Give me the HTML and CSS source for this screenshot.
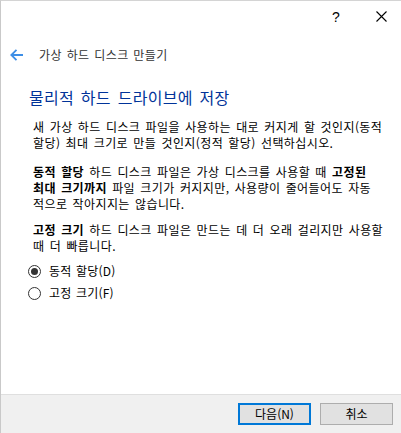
FILE: index.html
```html
<!doctype html>
<html lang="ko">
<head>
    <meta charset="UTF-8">
    <title>가상 하드 디스크 만들기</title>
    <link rel="stylesheet" href="styles.css">
</head>
<body>
    <div class="wz">
        <div class="wz-caption">
            <span class="wz-cap-btn">?</span>
            <span class="wz-cap-btn wz-close">
                <svg width="11" height="11" viewBox="0 0 11 11"><path d="M0.5 0.5L10.5 10.5M10.5 0.5L0.5 10.5" stroke="#000" stroke-width="1.1" fill="none"/></svg>
            </span>
        </div>
        <div class="wz-nav">
            <svg class="wz-back" width="13" height="12" viewBox="0 0 13 12"><path d="M1 6H13M6.5 0.8L1.3 6L6.5 11.2" stroke="#3d8ee6" stroke-width="1.8" fill="none"/></svg>
            <span class="wz-nav-title">가상 하드 디스크 만들기</span>
        </div>
        <h1 class="wz-heading">물리적 하드 드라이브에 저장</h1>
        <div class="wz-body">
            <p>새 가상 하드 디스크 파일을 사용하는 대로 커지게 할 것인지(동적<br>할당) 최대 크기로 만들 것인지(정적 할당) 선택하십시오.</p>
            <p><b>동적 할당</b> 하드 디스크 파일은 가상 디스크를 사용할 때 <b>고정된</b><br><b>최대 크기까지</b> 파일 크기가 커지지만, 사용량이 줄어들어도 자동<br>적으로 작아지지는 않습니다.</p>
            <p><b>고정 크기</b> 하드 디스크 파일은 만드는 데 더 오래 걸리지만 사용할<br>때 더 빠릅니다.</p>
            <ul class="wz-opts">
                <li><span class="wz-radio checked"></span>동적 할당(D)</li>
                <li><span class="wz-radio"></span>고정 크기(F)</li>
            </ul>
        </div>
        <div class="wz-foot">
            <span class="wz-btn wz-default">다음(N)</span>
            <span class="wz-btn">취소</span>
        </div>
    </div>
</body>
</html>
```
FILE: styles.css
```css
/* reset */
body,h1,p,ul,li{margin:0;padding:0;}
ul{list-style:none;}
html,body{width:100%;height:100%;background:#fff;}
body{font:12px/16px "Noto Sans CJK KR", "Liberation Sans", sans-serif;color:#000;}
b{font-weight:bold;}

/* wizard window */
.wz{width:401px;height:433px;box-sizing:border-box;border-top:1px solid #d4d4d4;border-left:1px solid #c9c9c9;display:flex;flex-direction:column;}
.wz-caption{height:31px;display:flex;justify-content:flex-end;align-items:center;}
.wz-cap-btn{width:40px;height:31px;display:flex;align-items:center;justify-content:center;font:14px "Liberation Sans", sans-serif;color:#000;}
.wz-close{margin-left:5px;}

.wz-nav{height:46px;display:flex;align-items:center;padding-left:9px;}
.wz-back{margin-right:16px;}
.wz-nav-title{color:#333;font-size:12px;letter-spacing:0.4px;word-spacing:1px;}

.wz-heading{font:16px/20px "Noto Sans CJK KR", sans-serif;color:#003399;padding:9px 0 0 28px;letter-spacing:0.3px;word-spacing:2px;}

.wz-body{padding:12px 0 0 32px;flex:1;letter-spacing:0.4px;word-spacing:1.5px;white-space:nowrap;}
.wz-body p{margin-bottom:13px;}
.wz-body p:nth-child(2){margin-bottom:10px;}
.wz-opts{margin-top:-4px;}
.wz-opts li{display:flex;align-items:center;height:16px;margin-left:-5px;margin-bottom:6px;color:#000;letter-spacing:0.2px;word-spacing:1px;}
.wz-radio{width:11px;height:11px;border:1px solid #333;border-radius:50%;margin-right:8px;position:relative;background:#fff;}
.wz-radio.checked:after{content:"";position:absolute;left:2px;top:2px;width:7px;height:7px;border-radius:50%;background:#333;}

.wz-foot{height:38px;border-top:1px solid #dfdfdf;background:#f0f0f0;display:flex;justify-content:flex-end;align-items:center;gap:9px;padding-right:8px;}
.wz-btn{width:71px;height:20px;border:1px solid #adadad;background:#e1e1e1;display:flex;align-items:center;justify-content:center;font-size:12px;color:#000;}
.wz-default{width:69px;height:18px;border:2px solid #0078d7;}
```
